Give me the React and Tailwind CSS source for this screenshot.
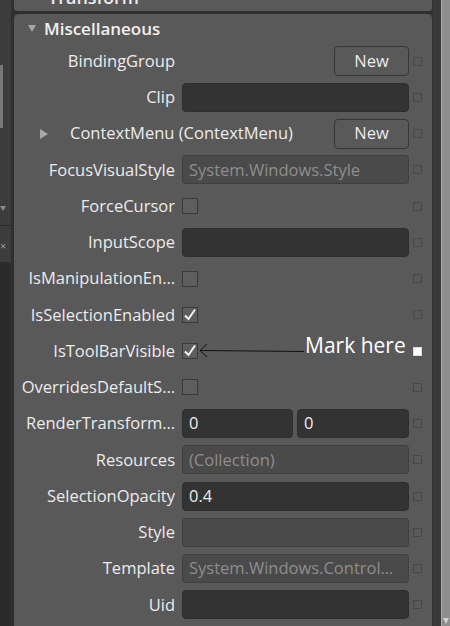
import React from 'react';

const rows = [
    { label: 'BindingGroup', kind: 'button' },
    { label: 'Clip', kind: 'edit' },
    { label: 'ContextMenu (ContextMenu)', kind: 'expand' },
    { label: 'FocusVisualStyle', kind: 'readonly', value: 'System.Windows.Style' },
    { label: 'ForceCursor', kind: 'check' },
    { label: 'InputScope', kind: 'edit' },
    { label: 'IsManipulationEn…', kind: 'check' },
    { label: 'IsSelectionEnabled', kind: 'check', checked: true },
    { label: 'IsToolBarVisible', kind: 'check', checked: true, mark: true },
    { label: 'OverridesDefaultS…', kind: 'check' },
    { label: 'RenderTransform…', kind: 'pair' },
    { label: 'Resources', kind: 'readonly', value: '(Collection)' },
    { label: 'SelectionOpacity', kind: 'edit', value: '0.4' },
    { label: 'Style', kind: 'readonly' },
    { label: 'Template', kind: 'readonly', value: 'System.Windows.Control…' },
    { label: 'Uid', kind: 'edit' },
];

function NewButton() {
    return (
        <div className="ml-auto w-[75px] h-[30px] rounded-[4px] border border-[#363636] flex items-center justify-center text-[16.5px] text-[#ececec]">
            New
        </div>
    );
}

function EditBox({ value, className = 'w-full' }) {
    return (
        <div className={`${className} h-[29px] rounded-[4px] bg-[#333333] border border-[#2e2e2e] flex items-center px-[6px] text-[16.5px] text-[#ececec]`}>
            {value}
        </div>
    );
}

function ReadOnlyBox({ value }) {
    return (
        <div className="w-full h-[29px] rounded-[4px] bg-[#4a4a4a] border border-dotted border-[#363636] flex items-center px-[6px] text-[16.5px] text-[#8e8e8e] whitespace-nowrap overflow-hidden">
            {value}
        </div>
    );
}

function CheckBox({ checked }) {
    return (
        <div className="w-[16px] h-[16px] border border-[#393939] bg-[#5e5e5e] flex items-center justify-center">
            {checked && (
                <svg width="14" height="14" viewBox="0 0 14 14">
                    <path d="M2 7.5 L5.5 11 L12 1.5" fill="none" stroke="#f4f4f4" strokeWidth="2" />
                </svg>
            )}
        </div>
    );
}

function Value({ row }) {
    switch (row.kind) {
        case 'button':
            return <NewButton />;
        case 'edit':
            return <EditBox value={row.value} />;
        case 'readonly':
            return <ReadOnlyBox value={row.value} />;
        case 'check':
            return <CheckBox checked={row.checked} />;
        case 'pair':
            return (
                <div className="flex gap-[4px] w-full">
                    <EditBox value="0" className="w-[111px]" />
                    <EditBox value="0" className="flex-1" />
                </div>
            );
        default:
            return null;
    }
}

function Row({ row }) {
    const square = row.mark
        ? 'w-[9px] h-[9px] bg-white border border-[#dcdcdc]'
        : 'w-[9px] h-[9px] border border-[#474747]';

    if (row.kind === 'expand') {
        return (
            <div className="h-[36.25px] flex items-center">
                <div className="w-[395px] flex items-center">
                    <span className="ml-[26px] w-0 h-0 border-y-[5px] border-y-transparent border-l-[8px] border-l-[#a8a8a8]" />
                    <span className="ml-[22px] text-[16.5px] text-[#ececec] whitespace-nowrap">{row.label}</span>
                    <NewButton />
                </div>
                <div className="w-[16px] flex justify-center">
                    <div className={square} />
                </div>
            </div>
        );
    }

    return (
        <div className="relative h-[36.25px] flex items-center">
            <div className="w-[161px] text-right text-[16.5px] text-[#ececec] whitespace-nowrap overflow-hidden">
                {row.label}
            </div>
            <div className="ml-[7px] w-[227px] flex items-center">
                <Value row={row} />
            </div>
            <div className="w-[16px] flex justify-center">
                <div className={square} />
            </div>
            {row.mark && (
                <>
                    <svg className="absolute left-[185px] top-[10px]" width="106" height="16" viewBox="0 0 106 16">
                        <path d="M1 7.5 L105 8.5" stroke="#111" strokeWidth="1" fill="none" />
                        <path d="M8 1 L1 7.5 L8 14" stroke="#111" strokeWidth="1" fill="none" />
                    </svg>
                    <span className="absolute left-[291px] top-[2px] text-[21px] leading-none text-white">
                        Mark here
                    </span>
                </>
            )}
        </div>
    );
}

export default function App() {
    return (
        <div className="w-[450px] h-[626px] flex overflow-hidden bg-[#3a3a3a] font-['Open_Sans','Noto_Sans',sans-serif]">
            {/* left docked strip */}
            <div className="w-[14px] flex">
                <div className="w-[11px] flex flex-col">
                    <div className="h-[262px] bg-[#3c3c3c] flex flex-col">
                        <div className="mt-[65px] h-[63px] w-[3px] bg-[#777777]" />
                        <div className="mt-[78px] w-0 h-0 border-x-[3px] border-x-transparent border-t-[5px] border-t-[#8a8a8a]" />
                        <div className="mt-[14px] h-[1px] bg-[#2a2a2a]" />
                        <div className="mt-[14px] text-[11px] leading-none text-[#9a9a9a]">×</div>
                    </div>
                    <div className="flex-1 bg-[#2b2b2b] rounded-tr-[3px]" />
                </div>
                <div className="w-[3px] bg-[#2f2f2f]" />
            </div>

            {/* property grid */}
            <div className="w-[418px] flex flex-col">
                <div className="h-[11px] bg-[#595959] rounded-b-[4px] overflow-hidden">
                    <div className="-mt-[16px] ml-[34px] text-[18px] font-semibold text-[#ececec]">Transform</div>
                </div>
                <div className="h-[3px] bg-[#2f2f2f]" />
                <div className="flex-1 bg-[#595959] rounded-t-[5px]">
                    <div className="h-[29px] flex items-center">
                        <span className="ml-[14px] w-0 h-0 border-x-[4px] border-x-transparent border-t-[7px] border-t-[#a8a8a8]" />
                        <span className="ml-[8px] text-[17px] font-semibold text-[#f0f0f0]">Miscellaneous</span>
                    </div>
                    {rows.map((row) => (
                        <Row key={row.label} row={row} />
                    ))}
                </div>
            </div>

            {/* right edge and scrollbar */}
            <div className="w-[9px] bg-[#3a3a3a] border-l border-[#333333]" />
            <div className="w-[9px] bg-[#8e8e8e] flex flex-col border-l border-[#a9a9a9]">
                <div className="flex-1" />
                <div className="mb-[2px] ml-[1px] w-0 h-0 border-x-[3px] border-x-transparent border-t-[6px] border-t-[#cfcfcf]" />
            </div>
        </div>
    );
}
